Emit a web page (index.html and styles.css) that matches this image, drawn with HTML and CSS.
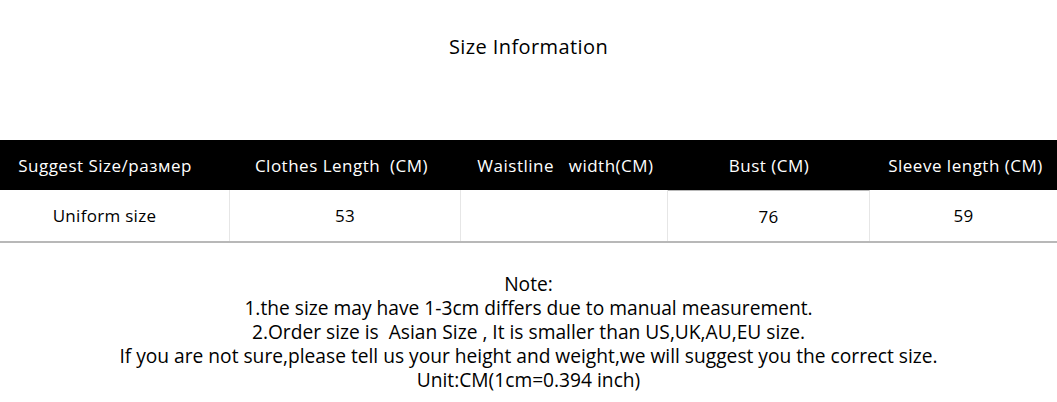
FILE: index.html
```html
<!DOCTYPE html>
<html>
<head>
<meta charset="utf-8">
<link rel="stylesheet" href="styles.css">
</head>
<body>
<div class="page">
  <h1 class="title">Size Information</h1>
  <div class="table">
    <div class="row head">
      <div class="cell c1">Suggest Size/размер</div>
      <div class="cell c2">Clothes Length&nbsp; (CM)</div>
      <div class="cell c3">Waistline&nbsp;&nbsp;&nbsp;width(CM)</div>
      <div class="cell c4">Bust (CM)</div>
      <div class="cell c5">Sleeve length (CM)</div>
    </div>
    <div class="row body">
      <div class="cell c1">Uniform size</div>
      <div class="cell c2">53</div>
      <div class="cell c3"></div>
      <div class="cell c4">76</div>
      <div class="cell c5">59</div>
    </div>
  </div>
  <div class="note">
    <p>Note:</p>
    <p>1.the size may have 1-3cm differs due to manual measurement.</p>
    <p>2.Order size is&nbsp; Asian Size , It is smaller than US,UK,AU,EU size.</p>
    <p>If you are not sure,please tell us your height and weight,we will suggest you the correct size.</p>
    <p>Unit:CM(1cm=0.394 inch)</p>
  </div>
</div>
</body>
</html>
```
FILE: styles.css
```css
html, body {
  margin: 0;
  padding: 0;
  background: #fff;
}
.page {
  width: 1057px;
  height: 402px;
  overflow: hidden;
  font-family: "Open Sans", "Noto Sans", sans-serif;
  color: #000;
}
.title {
  margin: 0;
  padding-top: 33px;
  height: 140px;
  box-sizing: border-box;
  font-size: 20px;
  font-weight: 400;
  letter-spacing: 0.4px;
  line-height: 28px;
  text-align: center;
}
.table {
  width: 1057px;
}
.row {
  display: grid;
  grid-template-columns: 230px 231px 207px 202px 187px;
}
.head {
  background: #000;
  color: #fff;
  height: 50px;
}
.body {
  height: 53px;
  border-bottom: 2px solid #b8b8b8;
  box-sizing: border-box;
}
.cell {
  display: flex;
  align-items: center;
  justify-content: center;
  font-size: 17px;
  letter-spacing: 0.5px;
  white-space: nowrap;
}
.head .c1 { padding-right: 20px; }
.head .c2 { padding-right: 8px; }
.head .c3 { padding-left: 2px; }
.head .c5 { padding-left: 4px; }
.body .cell { letter-spacing: 0.3px; }
.body .c1 { padding-right: 20px; }
.body .cell { border-right: 1px solid #e6e6e6; }
.body .c4 { border-top: 1px solid #b8b8b8; }
.body .c5 { border-right: none; }
.note {
  padding-top: 29px;
  text-align: center;
  font-size: 19.2px;
  line-height: 24px;
}
.note p {
  margin: 0;
}
```
